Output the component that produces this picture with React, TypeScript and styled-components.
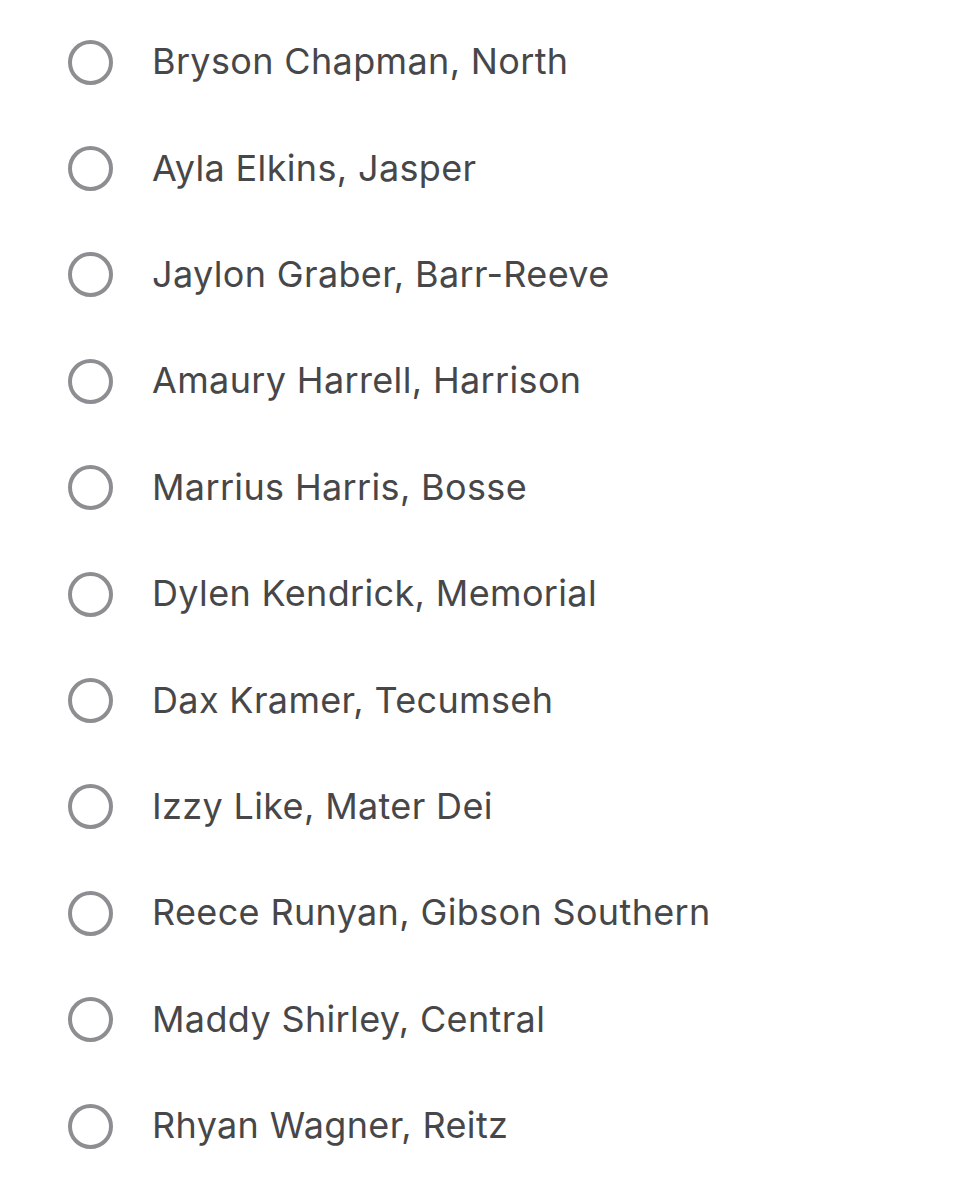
import styled, { createGlobalStyle } from "styled-components";

const GlobalStyle = createGlobalStyle`
  html, body {
    margin: 0;
    padding: 0;
    background: #ffffff;
  }
`;

const List = styled.div`
  display: flex;
  flex-direction: column;
  padding: 9px 0 0 68px;
  width: 963px;
  min-height: 1200px;
  box-sizing: border-box;
  background: #ffffff;
  font-family: Inter, "Liberation Sans", sans-serif;
`;

const Row = styled.label`
  display: flex;
  align-items: center;
  height: 106.4px;
  gap: 39px;
  cursor: pointer;
`;

const Radio = styled.span`
  width: 45px;
  height: 45px;
  box-sizing: border-box;
  border: 4px solid #8e8e92;
  border-radius: 50%;
  flex: none;
`;

const Name = styled.span`
  font-size: 36px;
  font-weight: 400;
  color: #474749;
  letter-spacing: 0.35px;
  line-height: 1;
  padding-bottom: 2px;
`;

const options = [
  "Bryson Chapman, North",
  "Ayla Elkins, Jasper",
  "Jaylon Graber, Barr-Reeve",
  "Amaury Harrell, Harrison",
  "Marrius Harris, Bosse",
  "Dylen Kendrick, Memorial",
  "Dax Kramer, Tecumseh",
  "Izzy Like, Mater Dei",
  "Reece Runyan, Gibson Southern",
  "Maddy Shirley, Central",
  "Rhyan Wagner, Reitz",
];

const App = () => {
  return (
    <>
      <GlobalStyle />
      <List>
        {options.map((item) => (
          <Row key={item}>
            <Radio />
            <Name>{item}</Name>
          </Row>
        ))}
      </List>
    </>
  );
};

export default App;
